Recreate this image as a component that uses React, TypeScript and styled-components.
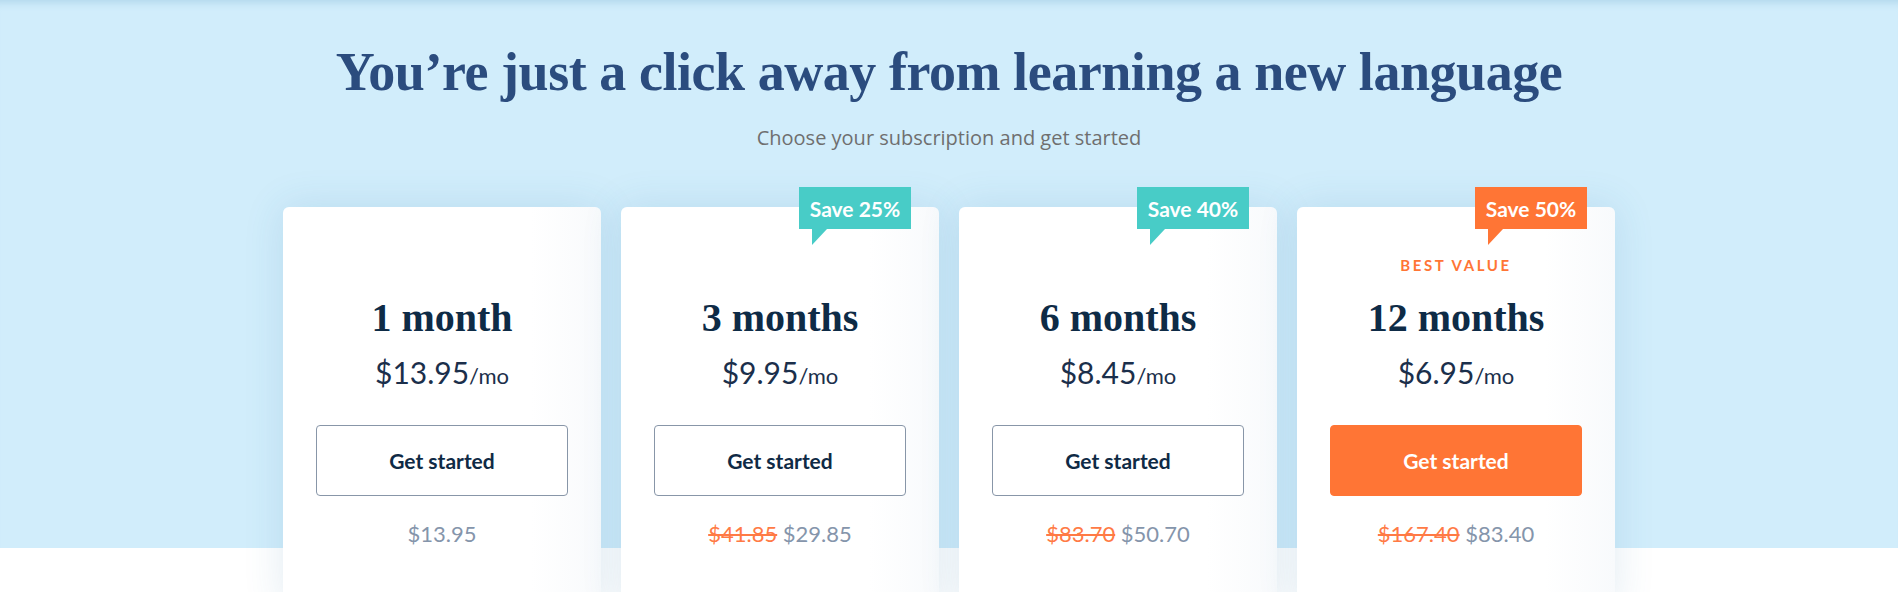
import styled, { createGlobalStyle } from "styled-components";

const GlobalStyle = createGlobalStyle`
  html, body {
    margin: 0;
    padding: 0;
    background: #ffffff;
  }
  * {
    box-sizing: border-box;
  }
`;

const Page = styled.main`
  min-height: 100vh;
  background: #ffffff;
  overflow: hidden;
`;

const Hero = styled.section`
  height: 548px;
  padding-top: 40px;
  display: flex;
  flex-direction: column;
  align-items: center;
  background: #d1edfb;
  box-shadow: inset 0 10px 8px -8px rgba(80, 150, 195, 0.28);
`;

const Title = styled.h1`
  margin: 0;
  font-family: "Liberation Serif", "Times New Roman", serif;
  font-weight: 700;
  font-size: 54px;
  line-height: 64px;
  letter-spacing: -0.45px;
  color: #2b4c7e;
`;

const Subtitle = styled.p`
  margin: 21px 0 0;
  font-family: "Open Sans", sans-serif;
  font-size: 20px;
  line-height: 26px;
  color: #6f6f6f;
`;

const Plans = styled.div`
  margin-top: 56px;
  display: grid;
  grid-template-columns: repeat(4, 318px);
  gap: 20px;
`;

const Card = styled.article`
  position: relative;
  padding: 49px 33px 60px;
  display: flex;
  flex-direction: column;
  align-items: center;
  border-radius: 6px;
  background: linear-gradient(90deg, #ffffff 78%, #f8fafc 100%);
  box-shadow: 0 0 40px rgba(40, 110, 165, 0.14);
`;

const Badge = styled.div<{ $tone: "teal" | "orange" }>`
  position: absolute;
  top: -20px;
  right: 28px;
  width: 112px;
  height: 42px;
  display: flex;
  align-items: center;
  justify-content: center;
  font-family: Lato, sans-serif;
  font-weight: 700;
  font-size: 21px;
  color: #ffffff;
  background: ${(p) => (p.$tone === "orange" ? "#ff7535" : "#48ccc7")};

  &::after {
    content: "";
    position: absolute;
    left: 13px;
    top: 100%;
    border-top: 16px solid ${(p) => (p.$tone === "orange" ? "#ff7535" : "#48ccc7")};
    border-right: 15px solid transparent;
  }
`;

const Label = styled.div`
  height: 18px;
  font-family: Lato, sans-serif;
  font-weight: 700;
  font-size: 15px;
  line-height: 18px;
  letter-spacing: 2.6px;
  color: #ff7535;
`;

const PlanName = styled.h2`
  margin: 20px 0 0;
  font-family: "Liberation Serif", "Times New Roman", serif;
  font-weight: 700;
  font-size: 40px;
  line-height: 48px;
  color: #0e2b46;
`;

const Price = styled.div`
  margin-top: 12px;
  font-family: Lato, sans-serif;
  font-size: 30px;
  line-height: 36px;
  color: #1b2f4b;

  span {
    font-size: 22px;
  }
`;

const Button = styled.button<{ $primary?: boolean }>`
  margin-top: 31px;
  width: 100%;
  height: 71px;
  border-radius: 4px;
  border: 1px solid ${(p) => (p.$primary ? "#ff7535" : "#8896a8")};
  background: ${(p) => (p.$primary ? "#ff7535" : "#ffffff")};
  color: ${(p) => (p.$primary ? "#ffffff" : "#0f2a45")};
  font-family: Lato, sans-serif;
  font-weight: 700;
  font-size: 21px;
  cursor: pointer;
`;

const Total = styled.div`
  margin-top: 24px;
  font-family: Lato, sans-serif;
  font-size: 22px;
  line-height: 28px;
  color: #8595ab;

  s {
    color: #ff7a45;
  }
`;

type Plan = {
  name: string;
  monthly: string;
  was?: string;
  total: string;
  save?: string;
  best?: boolean;
};

const plans: Plan[] = [
  { name: "1 month", monthly: "$13.95", total: "$13.95" },
  { name: "3 months", monthly: "$9.95", was: "$41.85", total: "$29.85", save: "Save 25%" },
  { name: "6 months", monthly: "$8.45", was: "$83.70", total: "$50.70", save: "Save 40%" },
  { name: "12 months", monthly: "$6.95", was: "$167.40", total: "$83.40", save: "Save 50%", best: true },
];

export default function App() {
  return (
    <Page>
      <GlobalStyle />
      <Hero>
        <Title>You’re just a click away from learning a new language</Title>
        <Subtitle>Choose your subscription and get started</Subtitle>
        <Plans>
          {plans.map((plan) => (
            <Card key={plan.name}>
              {plan.save && <Badge $tone={plan.best ? "orange" : "teal"}>{plan.save}</Badge>}
              <Label>{plan.best ? "BEST VALUE" : ""}</Label>
              <PlanName>{plan.name}</PlanName>
              <Price>
                {plan.monthly}
                <span>/mo</span>
              </Price>
              <Button $primary={plan.best}>Get started</Button>
              <Total>
                {plan.was && (
                  <>
                    <s>{plan.was}</s>{" "}
                  </>
                )}
                {plan.total}
              </Total>
            </Card>
          ))}
        </Plans>
      </Hero>
    </Page>
  );
}
